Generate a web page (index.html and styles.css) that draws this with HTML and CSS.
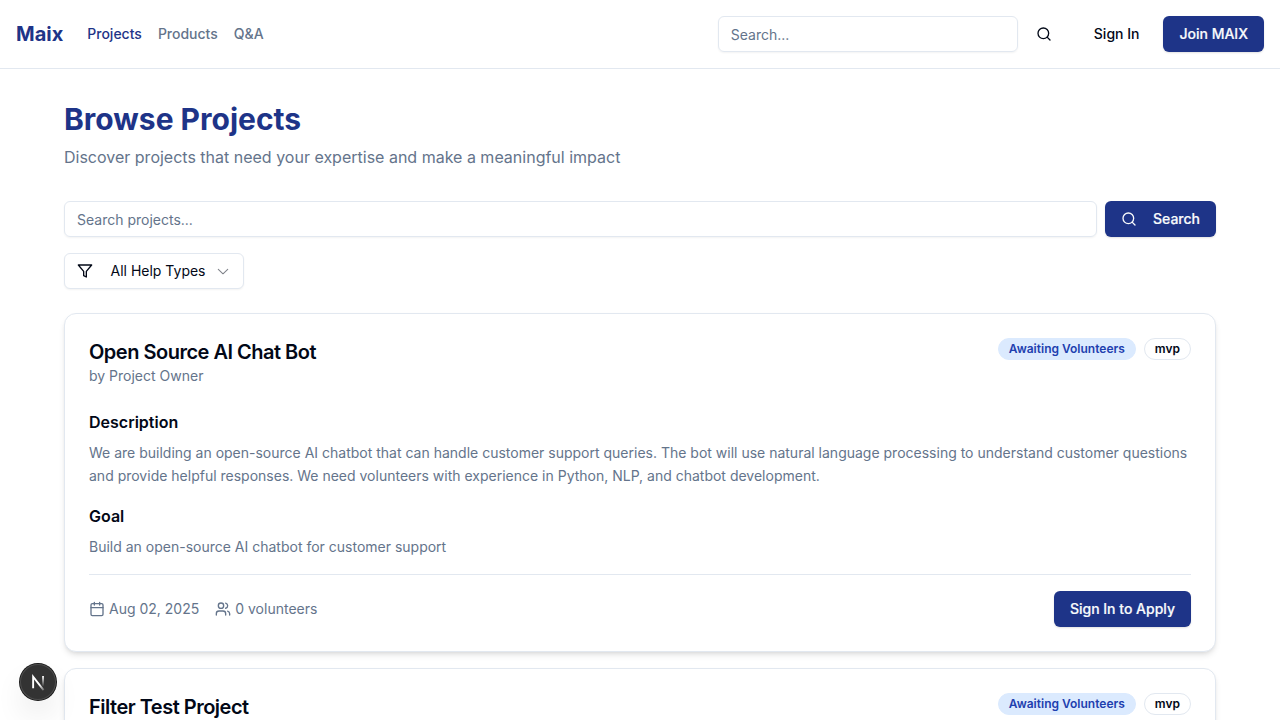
FILE: index.html
```html
<!DOCTYPE html>
<html lang="en">
<head>
<meta charset="utf-8">
<title>Browse Projects - Maix</title>
<link rel="stylesheet" href="styles.css">
</head>
<body>
<header class="topbar">
  <nav class="nav">
    <a class="brand">Maix</a>
    <a class="nav-link active">Projects</a>
    <a class="nav-link">Products</a>
    <a class="nav-link">Q&amp;A</a>
  </nav>
  <div class="tools">
    <input class="input top-search" type="text" placeholder="Search...">
    <button class="icon-btn" aria-label="Search"><svg class="icon" viewBox="0 0 24 24"><circle cx="11" cy="11" r="8"/><path d="m21 21-4.3-4.3"/></svg></button>
    <button class="btn ghost">Sign In</button>
    <button class="btn primary">Join MAIX</button>
  </div>
</header>
<main class="main">
  <h1 class="title">Browse Projects</h1>
  <p class="subtitle">Discover projects that need your expertise and make a meaningful impact</p>
  <div class="search-row">
    <input class="input" type="text" placeholder="Search projects...">
    <button class="btn primary search-btn"><svg class="icon" viewBox="0 0 24 24"><circle cx="11" cy="11" r="8"/><path d="m21 21-4.3-4.3"/></svg>Search</button>
  </div>
  <button class="select">
    <svg class="icon" viewBox="0 0 24 24"><path d="M22 3H2l8 9.46V19l4 2v-8.54L22 3z"/></svg>
    <span class="select-label">All Help Types</span>
    <svg class="icon chevron" viewBox="0 0 15 15"><path d="M3.1 5.9 7.5 10.1 11.9 5.9"/></svg>
  </button>
  <section class="cards">
    <article class="card">
      <div class="card-head">
        <div>
          <h2 class="card-title">Open Source AI Chat Bot</h2>
          <p class="owner">by Project Owner</p>
        </div>
        <div class="badges"><span class="badge status">Awaiting Volunteers</span><span class="badge">mvp</span></div>
      </div>
      <h3 class="label">Description</h3>
      <p class="text">We are building an open-source AI chatbot that can handle customer support queries. The bot will use natural language processing to understand customer questions and provide helpful responses. We need volunteers with experience in Python, NLP, and chatbot development.</p>
      <h3 class="label">Goal</h3>
      <p class="text">Build an open-source AI chatbot for customer support</p>
      <div class="card-foot">
        <div class="meta">
          <span class="meta-item"><svg class="icon" viewBox="0 0 24 24"><path d="M8 2v4M16 2v4M3 10h18"/><rect x="3" y="4" width="18" height="18" rx="2"/></svg>Aug 02, 2025</span>
          <span class="meta-item"><svg class="icon" viewBox="0 0 24 24"><path d="M16 21v-2a4 4 0 0 0-4-4H6a4 4 0 0 0-4 4v2"/><circle cx="9" cy="7" r="4"/><path d="M22 21v-2a4 4 0 0 0-3-3.87M16 3.13a4 4 0 0 1 0 7.75"/></svg>0 volunteers</span>
        </div>
        <button class="btn primary">Sign In to Apply</button>
      </div>
    </article>
    <article class="card">
      <div class="card-head">
        <h2 class="card-title">Filter Test Project</h2>
        <div class="badges"><span class="badge status">Awaiting Volunteers</span><span class="badge">mvp</span></div>
      </div>
    </article>
  </section>
</main>
<div class="dev-badge">
  <svg class="dev-logo" viewBox="0 0 40 40">
    <defs>
      <linearGradient id="diag" gradientUnits="userSpaceOnUse" x1="22" y1="23" x2="28" y2="31"><stop stop-color="#fff"/><stop offset="1" stop-color="#fff" stop-opacity="0"/></linearGradient>
      <linearGradient id="bar" gradientUnits="userSpaceOnUse" x1="25" y1="13" x2="25" y2="25"><stop stop-color="#fff"/><stop offset="1" stop-color="#fff" stop-opacity="0"/></linearGradient>
    </defs>
    <path d="M14.6 27V14.1L26.2 29" stroke="url(#diag)"/>
    <path d="M25.6 13.3v12.7" stroke="url(#bar)"/>
  </svg>
</div>
</body>
</html>
```
FILE: styles.css
```css
* { box-sizing: border-box; }
body, h1, h2, h3, p { margin: 0; }
body {
  height: 720px;
  overflow: hidden;
  background: #fff;
  color: #020817;
  font-family: Inter, "Liberation Sans", sans-serif;
  font-size: 14px;
  line-height: 20px;
}
button, input { font: inherit; color: inherit; margin: 0; }
.icon {
  width: 16px;
  height: 16px;
  flex: none;
  fill: none;
  stroke: currentColor;
  stroke-width: 2;
  stroke-linecap: round;
  stroke-linejoin: round;
}
.topbar {
  display: flex;
  align-items: center;
  justify-content: space-between;
  height: 69px;
  padding: 0 16px;
  border-bottom: 1px solid #e2e8f0;
}
.nav { display: flex; align-items: center; gap: 16px; }
.brand { margin-right: 8px; font-size: 20px; line-height: 28px; font-weight: 700; color: #1e3488; }
.nav-link { font-weight: 500; color: #64748b; }
.nav-link.active { color: #1e3488; }
.tools { display: flex; align-items: center; gap: 8px; }
.input {
  flex: 1;
  min-width: 0;
  height: 36px;
  padding: 4px 12px;
  border: 1px solid #e2e8f0;
  border-radius: 6px;
  background: transparent;
  box-shadow: 0 1px 2px rgba(0, 0, 0, .05);
  outline: none;
}
.input::placeholder { color: #64748b; opacity: 1; }
.top-search { flex: none; width: 300px; }
.icon-btn {
  display: flex;
  align-items: center;
  justify-content: center;
  width: 36px;
  height: 36px;
  padding: 0;
  border: 0;
  background: none;
}
.btn {
  display: flex;
  align-items: center;
  justify-content: center;
  gap: 8px;
  height: 36px;
  padding: 0 16px;
  border: 0;
  border-radius: 6px;
  background: none;
  font-weight: 500;
  white-space: nowrap;
}
.ghost { margin-left: 8px; }
.primary {
  background: #1e3488;
  color: #f8fafc;
  -webkit-text-stroke: .2px #f8fafc;
  box-shadow: 0 1px 2px rgba(0, 0, 0, .12);
}
.main { padding: 32px 64px 0; }
.title { font-size: 30px; line-height: 36px; font-weight: 700; color: #1e3488; }
.subtitle { margin-top: 8px; font-size: 16px; line-height: 24px; color: #64748b; }
.search-row { display: flex; gap: 8px; margin-top: 32px; }
.search-btn { gap: 16px; }
.select {
  display: flex;
  align-items: center;
  width: 180px;
  height: 36px;
  margin-top: 16px;
  padding: 0 12px;
  border: 1px solid #e2e8f0;
  border-radius: 6px;
  background: #fff;
  box-shadow: 0 1px 2px rgba(0, 0, 0, .05);
}
.select-label { margin-left: 17.5px; }
.chevron { margin-left: auto; stroke-width: 1; opacity: .5; }
.cards { display: flex; flex-direction: column; gap: 16px; margin-top: 24px; }
.card {
  padding: 24px;
  border: 1px solid #e2e8f0;
  border-radius: 12px;
  background: #fff;
  box-shadow: 0 4px 6px -1px rgba(0, 0, 0, .1), 0 2px 4px -2px rgba(0, 0, 0, .1);
}
.card-head {
  display: flex;
  justify-content: space-between;
  align-items: flex-start;
  margin-bottom: 24px;
}
.card-title { font-size: 20px; line-height: 28px; font-weight: 600; letter-spacing: -.5px; }
.owner { color: #64748b; }
.badges { display: flex; gap: 8px; }
.badge {
  padding: 2px 10px;
  border: 1px solid #e2e8f0;
  border-radius: 11px;
  font-size: 12px;
  line-height: 16px;
  font-weight: 600;
}
.badge.status { border-color: #dbeafe; background: #dbeafe; color: #1e40af; }
.label { margin-bottom: 8px; font-size: 16px; line-height: 24px; font-weight: 600; }
.text { margin-bottom: 16px; line-height: 22.75px; color: #64748b; }
.card-foot {
  display: flex;
  align-items: center;
  justify-content: space-between;
  padding-top: 16px;
  border-top: 1px solid #e2e8f0;
}
.meta { display: flex; gap: 16px; color: #64748b; }
.meta-item { display: flex; align-items: center; gap: 4px; }
.dev-badge {
  position: fixed;
  left: 20px;
  bottom: 20px;
  width: 36px;
  height: 36px;
  border-radius: 50%;
  background: #333;
  box-shadow: 0 0 0 1px #171717, inset 0 0 0 1px #4d4d4d, 0 16px 32px -8px rgba(0, 0, 0, .24);
}
.dev-logo { display: block; width: 36px; height: 36px; fill: none; stroke-width: 2.1; }
```
